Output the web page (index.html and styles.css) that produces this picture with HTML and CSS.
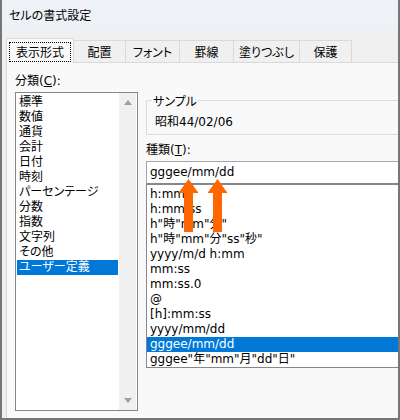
FILE: index.html
```html
<!DOCTYPE html>
<html lang="ja">
<head>
<meta charset="utf-8">
<title>セルの書式設定</title>
<link rel="stylesheet" href="styles.css">
</head>
<body>
<div class="window">
  <div class="titlebar">セルの書式設定</div>
  <div class="dialog">
    <div class="tabs">
      <div class="tab active t1"><span class="focus">表示形式</span></div>
      <div class="tab t2">配置</div>
      <div class="tab t3">フォント</div>
      <div class="tab t4">罫線</div>
      <div class="tab t5">塗りつぶし</div>
      <div class="tab t6">保護</div>
    </div>
    <div class="panel">
      <div class="left">
        <div class="label">分類(<u>C</u>):</div>
        <div class="catlist">
          <ul class="items">
            <li>標準</li>
            <li>数値</li>
            <li>通貨</li>
            <li>会計</li>
            <li>日付</li>
            <li>時刻</li>
            <li>パーセンテージ</li>
            <li>分数</li>
            <li>指数</li>
            <li>文字列</li>
            <li>その他</li>
            <li class="sel">ユーザー定義</li>
          </ul>
          <div class="scrollbar"><span class="arrow up"></span><span class="arrow down"></span></div>
        </div>
      </div>
      <div class="right">
        <fieldset class="sample">
          <legend>サンプル</legend>
          <div class="sample-text">昭和44/02/06</div>
        </fieldset>
        <div class="label type-label">種類(<u>T</u>):</div>
        <div class="input">gggee/mm/dd</div>
        <ul class="fmtlist">
          <li>h:mm</li>
          <li>h:mm:ss</li>
          <li>h"時"mm"分"</li>
          <li>h"時"mm"分"ss"秒"</li>
          <li>yyyy/m/d h:mm</li>
          <li>mm:ss</li>
          <li>mm:ss.0</li>
          <li>@</li>
          <li>[h]:mm:ss</li>
          <li>yyyy/mm/dd</li>
          <li class="sel">gggee/mm/dd</li>
          <li>gggee"年"mm"月"dd"日"</li>
        </ul>
      </div>
    </div>
  </div>
</div>
<svg class="arrows" width="400" height="420" viewBox="0 0 400 420" xmlns="http://www.w3.org/2000/svg">
  <path d="M188.5 179 L198.5 193 L193 193 L193 232 L184 232 L184 193 L178.5 193 Z" fill="#ff6600"/>
  <path d="M217.5 179 L227.5 193 L222 193 L222 232 L213 232 L213 193 L207.5 193 Z" fill="#ff6600"/>
</svg>
</body>
</html>
```

FILE: styles.css
```css
* { box-sizing: border-box; }

html, body {
  margin: 0;
  padding: 0;
}

body {
  position: relative;
  width: 400px;
  height: 420px;
  overflow: hidden;
  font-family: "DejaVu Sans", "Noto Sans CJK JP", sans-serif;
  font-size: 12px;
  color: #000;
  font-feature-settings: "palt";
}

.window {
  width: 400px;
  height: 420px;
  border: 2px solid #767676;
  border-top: 0;
  background: #f0f0f0;
  overflow: hidden;
  display: flex;
  flex-direction: column;
}

.titlebar {
  flex: none;
  height: 30px;
  line-height: 30px;
  padding-left: 7px;
  background: #eef2f7;
  font-family: "Noto Sans CJK JP", sans-serif;
  font-size: 12px;
}

.dialog {
  flex: 1;
  min-height: 0;
  display: flex;
  flex-direction: column;
  padding-top: 8px;
  padding-left: 4px;
}

.tabs {
  flex: none;
  height: 24px;
  display: flex;
  align-items: flex-end;
  position: relative;
  z-index: 1;
}

.tab {
  height: 22px;
  margin-left: -1px;
  border: 1px solid #d9d9d9;
  border-bottom: 0;
  background: #f0f0f0;
  display: flex;
  align-items: center;
  justify-content: center;
  line-height: 15px;
  font-family: "Noto Sans CJK JP", sans-serif;
}

.tab.active {
  height: 25px;
  margin-left: 0;
  margin-bottom: -1px;
  background: #f9f9f9;
  align-items: flex-start;
  padding-top: 3px;
}

.focus {
  display: block;
  height: 20px;
  line-height: 18px;
  padding: 0 6px;
  border: 1px dotted #000;
}

.t1 { width: 68px; }
.t2 { width: 53px; }
.t3 { width: 55px; }
.t4 { width: 55px; }
.t5 { width: 67px; }
.t6 { width: 53px; }

.panel {
  flex: 1;
  width: 440px;
  display: flex;
  align-items: flex-start;
  padding: 11px 0 0 8px;
  border-top: 1px solid #d9d9d9;
  border-left: 1px solid #d9d9d9;
  background: #f9f9f9;
}

.label {
  height: 15px;
  line-height: 15px;
  white-space: nowrap;
}

.label u {
  text-underline-offset: 1px;
}

.left {
  flex: none;
  width: 123px;
}

.catlist {
  margin-top: 3px;
  height: 319px;
  border: 1px solid #828790;
  background: #fff;
  display: flex;
}

ul {
  list-style: none;
  margin: 0;
}

li {
  height: 15px;
  line-height: 15px;
  white-space: nowrap;
}

li.sel {
  background: #0078d7;
  color: #fff;
}

.items {
  width: 103px;
  padding: 2px 1px 0 1px;
}

.items li {
  padding-left: 2px;
}

.scrollbar {
  width: 17px;
  background: #f0f0f0;
  display: flex;
  flex-direction: column;
  justify-content: space-between;
  align-items: center;
  padding: 7px 0 7px 0;
}

.arrow {
  display: block;
  width: 0;
  height: 0;
  border-left: 4px solid transparent;
  border-right: 4px solid transparent;
}

.arrow.up {
  border-bottom: 5px solid #a0a0a0;
}

.arrow.down {
  border-top: 5px solid #a0a0a0;
}

.right {
  flex: none;
  width: 280px;
  margin-left: 8px;
  margin-top: 19px;
}

.sample {
  margin: 0;
  min-width: 0;
  padding: 7px 5px 4px 5px;
  border: 1px solid #dcdcdc;
}

.sample legend {
  padding: 0 1px;
  height: 15px;
  line-height: 15px;
  font-family: "Noto Sans CJK JP", sans-serif;
}

.sample-text {
  height: 15px;
  line-height: 15px;
  padding-left: 3px;
}

.type-label {
  margin-top: 8px;
}

.input {
  margin-top: 3px;
  height: 23px;
  line-height: 21px;
  padding-left: 3px;
  background: #fff;
  border: 1px solid #a6a6a6;
  border-bottom-color: #828790;
}

.fmtlist {
  height: 184px;
  padding: 2px 0 0 0;
  border: 1px solid #828790;
  background: #fff;
}

.fmtlist li {
  padding-left: 3px;
}

.arrows {
  position: absolute;
  top: 0;
  left: 0;
  pointer-events: none;
}
```
